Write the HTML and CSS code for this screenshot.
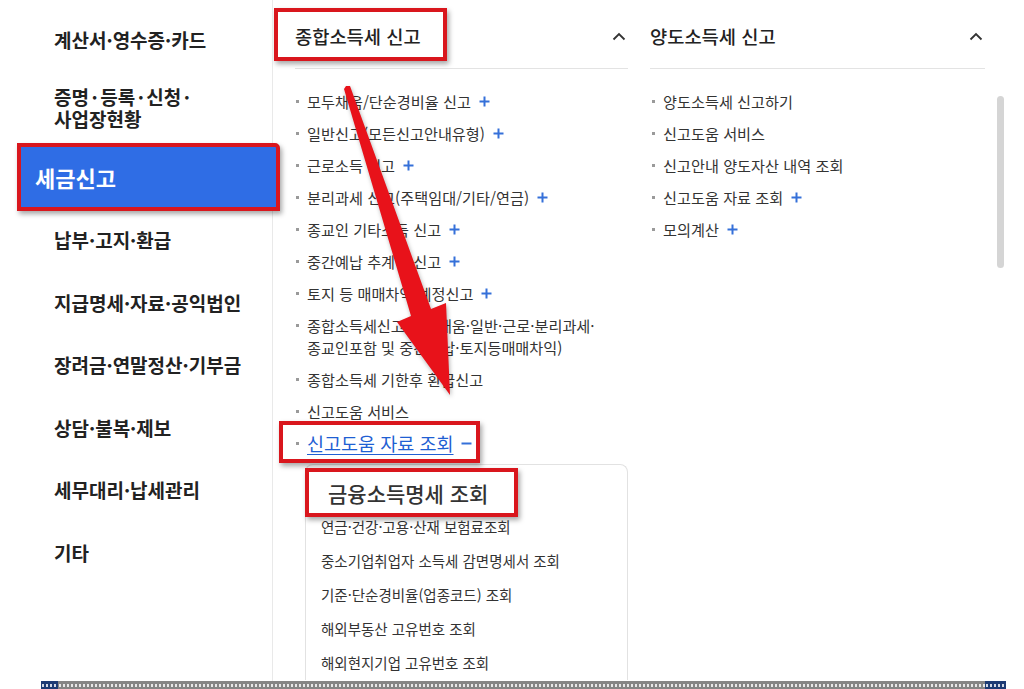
FILE: index.html
```html
<!DOCTYPE html>
<html lang="ko">
<head>
<meta charset="utf-8">
<title>세금신고</title>
<link rel="stylesheet" href="styles.css">
</head>
<body>
<div class="page">
  <div class="main">
    <nav class="side">
      <ul class="side-list">
        <li class="side-item side-item--first">계산서·영수증·카드</li>
        <li class="side-item side-item--two">증명<span class="dot">·</span>등록<span class="dot">·</span>신청<span class="dot">·</span><br>사업장현황</li>
        <li class="side-item side-item--active">세금신고</li>
        <li class="side-item side-item--after">납부·고지·환급</li>
        <li class="side-item">지급명세·자료·공익법인</li>
        <li class="side-item">장려금·연말정산·기부금</li>
        <li class="side-item">상담·불복·제보</li>
        <li class="side-item">세무대리·납세관리</li>
        <li class="side-item">기타</li>
      </ul>
    </nav>
    <div class="content">
      <section class="col col--mid">
        <div class="col-head">
          <span class="col-title mark mark--title">종합소득세 신고</span>
          <svg class="chev" width="14" height="9" viewBox="0 0 14 9"><path d="M1.5 7.5 L7 2 L12.5 7.5" fill="none" stroke="#333" stroke-width="1.8"/></svg>
        </div>
        <ul class="menu">
          <li class="menu-item"><span class="bullet"></span><span>모두채움/단순경비율 신고</span><svg class="plus" width="11" height="11" viewBox="0 0 11 11"><path d="M5.5 0.5V10.5M0.5 5.5H10.5" stroke="#3570d9" stroke-width="2"/></svg></li>
          <li class="menu-item"><span class="bullet"></span><span>일반신고(모든신고안내유형)</span><svg class="plus" width="11" height="11" viewBox="0 0 11 11"><path d="M5.5 0.5V10.5M0.5 5.5H10.5" stroke="#3570d9" stroke-width="2"/></svg></li>
          <li class="menu-item"><span class="bullet"></span><span>근로소득 신고</span><svg class="plus" width="11" height="11" viewBox="0 0 11 11"><path d="M5.5 0.5V10.5M0.5 5.5H10.5" stroke="#3570d9" stroke-width="2"/></svg></li>
          <li class="menu-item"><span class="bullet"></span><span>분리과세 신고(주택임대/기타/연금)</span><svg class="plus" width="11" height="11" viewBox="0 0 11 11"><path d="M5.5 0.5V10.5M0.5 5.5H10.5" stroke="#3570d9" stroke-width="2"/></svg></li>
          <li class="menu-item"><span class="bullet"></span><span>종교인 기타소득 신고</span><svg class="plus" width="11" height="11" viewBox="0 0 11 11"><path d="M5.5 0.5V10.5M0.5 5.5H10.5" stroke="#3570d9" stroke-width="2"/></svg></li>
          <li class="menu-item"><span class="bullet"></span><span>중간예납 추계액 신고</span><svg class="plus" width="11" height="11" viewBox="0 0 11 11"><path d="M5.5 0.5V10.5M0.5 5.5H10.5" stroke="#3570d9" stroke-width="2"/></svg></li>
          <li class="menu-item"><span class="bullet"></span><span>토지 등 매매차익 예정신고</span><svg class="plus" width="11" height="11" viewBox="0 0 11 11"><path d="M5.5 0.5V10.5M0.5 5.5H10.5" stroke="#3570d9" stroke-width="2"/></svg></li>
          <li class="menu-item"><span class="bullet"></span><span>종합소득세신고(모두채움·일반·근로·분리과세·<br>종교인포함 및 중간예납·토지등매매차익)</span></li>
          <li class="menu-item"><span class="bullet"></span><span>종합소득세 기한후 환급신고</span></li>
          <li class="menu-item"><span class="bullet"></span><span>신고도움 서비스</span></li>
          <li class="menu-item"><span class="mark mark--link"><span class="bullet"></span><a class="link">신고도움 자료 조회</a><svg class="minus" width="11" height="11" viewBox="0 0 11 11"><path d="M0.5 5.5H10.5" stroke="#3570d9" stroke-width="2"/></svg></span></li>
        </ul>
        <ul class="sub">
          <li class="sub-title"><span class="mark mark--sub">금융소득명세 조회</span></li>
          <li class="sub-item">연금·건강·고용·산재 보험료조회</li>
          <li class="sub-item">중소기업취업자 소득세 감면명세서 조회</li>
          <li class="sub-item">기준·단순경비율(업종코드) 조회</li>
          <li class="sub-item">해외부동산 고유번호 조회</li>
          <li class="sub-item">해외현지기업 고유번호 조회</li>
        </ul>
      </section>
      <section class="col col--right">
        <div class="col-head">
          <span class="col-title">양도소득세 신고</span>
          <svg class="chev" width="14" height="9" viewBox="0 0 14 9"><path d="M1.5 7.5 L7 2 L12.5 7.5" fill="none" stroke="#333" stroke-width="1.8"/></svg>
        </div>
        <ul class="menu menu--right">
          <li class="menu-item"><span class="bullet"></span><span>양도소득세 신고하기</span></li>
          <li class="menu-item"><span class="bullet"></span><span>신고도움 서비스</span></li>
          <li class="menu-item"><span class="bullet"></span><span>신고안내 양도자산 내역 조회</span></li>
          <li class="menu-item"><span class="bullet"></span><span>신고도움 자료 조회</span><svg class="plus" width="11" height="11" viewBox="0 0 11 11"><path d="M5.5 0.5V10.5M0.5 5.5H10.5" stroke="#3570d9" stroke-width="2"/></svg></li>
          <li class="menu-item"><span class="bullet"></span><span>모의계산</span><svg class="plus" width="11" height="11" viewBox="0 0 11 11"><path d="M5.5 0.5V10.5M0.5 5.5H10.5" stroke="#3570d9" stroke-width="2"/></svg></li>
        </ul>
      </section>
      <div class="vscroll"></div>
    </div>
  </div>
  <div class="hscroll"><span class="hs-end"></span><span class="hs-mid"></span><span class="hs-end hs-end--r"></span></div>
  <svg class="arrow" width="1024" height="689" viewBox="0 0 1024 689">
    <path d="M346 86 L350 86 L431 309 L446 303 L450 395 L397 322 L411 316 L344 89 Z" fill="#e8121a"/>
  </svg>
</div>
</body>
</html>
```

FILE: styles.css
```css
* { box-sizing: border-box; }
html, body { margin: 0; padding: 0; background: #fff; }
body {
  font-family: "Noto Sans CJK KR", "Noto Sans", sans-serif;
  color: #222;
}
ul { list-style: none; margin: 0; padding: 0; }

.page {
  position: relative;
  width: 1024px;
  height: 689px;
  overflow: hidden;
  display: flex;
  flex-direction: column;
}
.main {
  display: flex;
  height: 681px;
  overflow: hidden;
}

/* sidebar */
.side {
  width: 273px;
  flex: none;
  border-right: 1px solid #e9e9e9;
  padding-top: 8px;
  position: relative;
  z-index: 1;
}
.side-item {
  font-size: 19px;
  font-weight: 700;
  line-height: 22px;
  padding: 20px 0 20.6px 54px;
  color: #222;
  white-space: nowrap;
}
.side-item .dot { margin: 0 2.5px; }
.side-item--first { padding-top: 21px; padding-bottom: 21px; }
.side-item--two { padding-top: 14px; padding-bottom: 13px; }
.side-item--active {
  margin: 0 -8px 0 17px;
  padding: 19px 0 19px 14px;
  font-size: 22px;
  color: #fff;
  background: #2f6de5;
  border: 4px solid #d9161d;
  border-top-right-radius: 5px;
  box-shadow: 2px 3px 5px rgba(0,0,0,.35);
}
.side-item--after { padding-top: 18px; }

/* content */
.content {
  flex: 1;
  display: flex;
  padding-left: 22px;
}
.col { flex: none; }
.col--mid { width: 333px; }
.col--right { width: 335px; margin-left: 22px; }
.vscroll {
  flex: none;
  width: 7px;
  height: 172px;
  margin: 96px 0 0 12px;
  background: #d5d5d5;
  border-radius: 4px;
}

.col-head {
  display: flex;
  justify-content: space-between;
  align-items: center;
  padding: 22px 2px 18px 0;
  border-bottom: 1px solid #e3e3e3;
}
.col-title {
  font-size: 18.7px;
  font-weight: 500;
  line-height: 28px;
  color: #222;
}
.chev { display: block; }

.menu { padding: 16px 0 0 1px; }
.menu--right { padding-left: 2px; }
.menu-item {
  display: flex;
  align-items: flex-start;
  font-size: 15.2px;
  line-height: 22px;
  padding: 5px 0;
  color: #333;
}
.bullet {
  flex: none;
  width: 3px;
  height: 3px;
  margin: 9.5px 8px 0 0;
  background: #9a9a9a;
}
.plus { flex: none; margin: 5.5px 0 0 8px; }
.minus { flex: none; margin: 6px 0 0 7px; }

.link {
  font-size: 18.5px;
  color: #1f5fd3;
  text-decoration: underline;
  text-underline-offset: 3px;
  text-decoration-thickness: 1px;
}

.sub {
  margin: 5px 0 0 10px;
  border: 1px solid #e2e2e2;
  border-bottom: none;
  border-radius: 8px 8px 0 0;
  padding: 11px 0 0 15px;
}
.sub-title {
  font-size: 21px;
  font-weight: 500;
  line-height: 34px;
  padding-left: 7px;
  color: #333;
}
.sub-item {
  font-size: 14.5px;
  line-height: 34px;
  color: #333;
}

/* red annotation boxes */
.mark { position: relative; display: inline-block; }
.mark--link { display: inline-flex; align-items: flex-start; }
.mark::after {
  content: "";
  position: absolute;
  border: 4px solid #d9161d;
  box-shadow: 2px 3px 5px rgba(0,0,0,.35);
  pointer-events: none;
}
.mark--title::after { left: -21px; right: -26px; top: -14px; bottom: -11px; }
.mark--link::after { left: -17px; right: -8px; top: -11px; bottom: -9px; }
.mark--sub::after { left: -23px; right: -30px; top: -8px; bottom: -7px; }

/* bottom scrollbar */
.hscroll {
  display: flex;
  height: 8px;
  width: 965px;
  margin-left: 41px;
}
.hs-end, .hs-mid {
  background-image: linear-gradient(90deg, rgba(255,255,255,.8) 0 2px, transparent 2px 4px);
  background-size: 4px 3px;
  background-repeat: repeat-x;
  background-position: 1px center;
}
.hs-end { width: 17px; flex: none; background-color: #1d3b74; }
.hs-end--r { width: 21px; }
.hs-mid { flex: 1; background-color: #858585; }

/* arrow annotation */
.arrow {
  position: absolute;
  left: 0;
  top: 0;
  pointer-events: none;
  z-index: 5;
  filter: drop-shadow(1px 2px 2px rgba(0,0,0,.3));
}
```
